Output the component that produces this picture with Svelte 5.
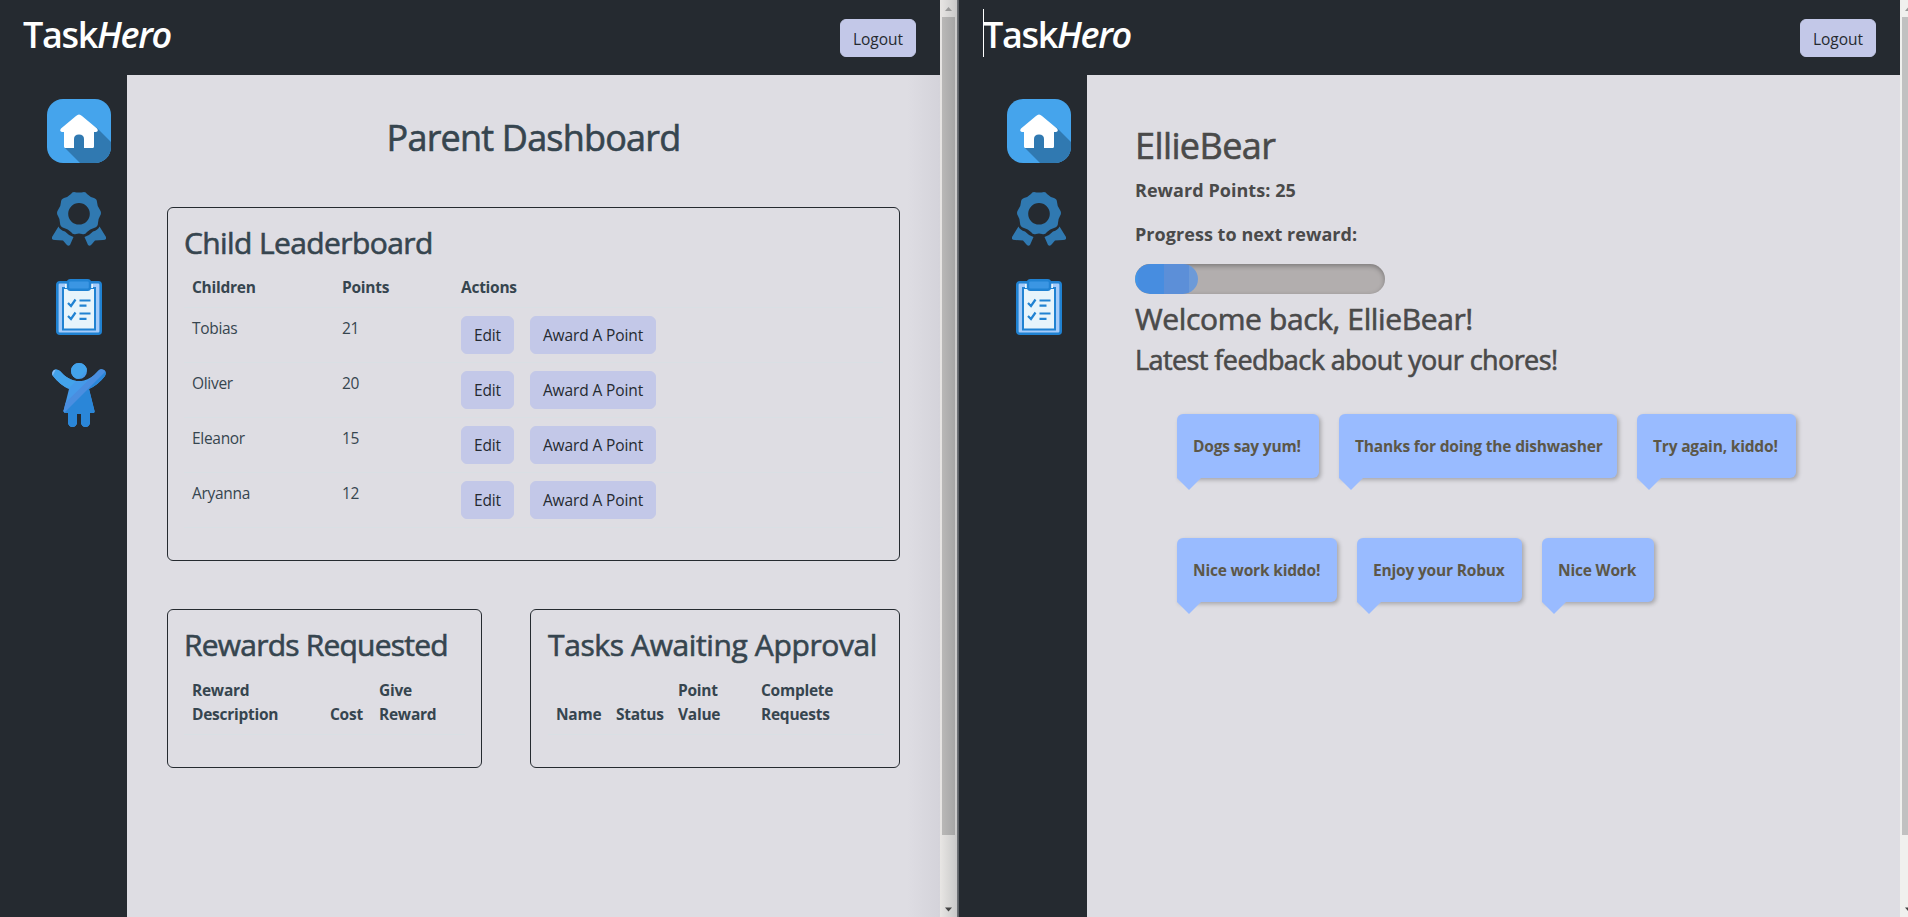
<script>
  const children = [
    { name: 'Tobias', points: 21 },
    { name: 'Oliver', points: 20 },
    { name: 'Eleanor', points: 15 },
    { name: 'Aryanna', points: 12 }
  ];
  const feedback = [
    [
      { text: 'Dogs say yum!', width: 142 },
      { text: 'Thanks for doing the dishwasher', width: 278 },
      { text: 'Try again, kiddo!', width: 159 }
    ],
    [
      { text: 'Nice work kiddo!', width: 160 },
      { text: 'Enjoy your Robux', width: 165 },
      { text: 'Nice Work', width: 112 }
    ]
  ];
  const progress = 25;
</script>

{#snippet homeIcon()}
  <svg class="icon home" viewBox="0 0 64 64">
    <rect width="64" height="64" rx="16" fill="#45a4ec" />
    <path d="M50 29L64 43V48A16 16 0 0 1 48 64H33L17.500 48.500L32 20Z" fill="#3079b1" />
    <path d="M29 17Q32 13.800 35 17L50 29.500Q52 32 49 33H47V47.500Q47 49 45.500 49H37V40Q37 35.500 32 35.500T27 40V49H18.500Q17 49 17 47.500V33H15Q12 32 14 29.500Z" fill="#fff" />
  </svg>
{/snippet}

{#snippet awardIcon()}
  <svg class="icon award" viewBox="0 0 54 54">
    <path fill="#3079b1" fill-rule="evenodd" d="M22 0Q27 1 32 0Q34 0 35 2Q38 5 42 6Q45 7 45 10Q45 14 48 18Q50 21 48 24Q46 27 46 31Q46 35 42 36Q38 37 35 40Q33 43 30 42Q27 41 24 42Q21 43 19 40Q16 37 12 36Q8 35 8 31Q8 27 6 24Q4 21 6 18Q9 14 9 10Q9 7 12 6Q16 5 19 2Q20 0 22 0ZM27 11A10.800 10.800 0 1 0 27 32.600A10.800 10.800 0 1 0 27 11Z" />
    <path fill="#3079b1" d="M6.500 34.500Q8 38 13 39.500Q16 43 21.500 45L18 53Q16 55 14 52L11 48.500L3 48Q-1 48 0 45ZM47.500 34.500Q46 38 41 39.500Q38 43 32.500 45L36 53Q38 55 40 52L43 48.500L51 48Q55 48 54 45Z" />
  </svg>
{/snippet}

{#snippet taskIcon()}
  <svg class="icon tasks" viewBox="0 0 46 56">
    <rect x="1.300" y="3.300" width="43.400" height="51.400" rx="2.500" fill="#a5cbf9" stroke="#2082d2" stroke-width="2.600" />
    <rect x="7" y="9" width="32" height="41.500" fill="#e7f4fb" stroke="#2082d2" stroke-width="2" />
    <path d="M9 5H37V9H9Z" fill="#e7f4fb" />
    <rect x="12" y="1.200" width="22" height="9.600" rx="2.500" fill="#3b96e3" stroke="#2082d2" stroke-width="2.400" />
    <path d="M12 24L15 27L19.500 20.500M12 37L15 40L19.500 33.500M23.500 21.500H34.500M23.500 26.700H30.500M23.500 34.500H34.500M23.500 39.800H30.500" fill="none" stroke="#2082d2" stroke-width="2.200" />
  </svg>
{/snippet}

{#snippet childIcon()}
  <svg class="icon child" viewBox="0 0 54 64">
    <defs>
      <clipPath id="figure">
        <circle cx="27" cy="8" r="8" />
        <path d="M8 8Q5 5.500 2 7Q-1 10 1 13Q8 22 17 26L11.500 48Q11.500 50 14 50H16V60Q17 64 20.500 64T25 60V51H29V60Q30 64 33.500 64T38 60V50H40Q43 50 42.500 48L37 26Q46 22 53 13Q55 9 52 7Q48 5 46 8Q39 16 32 17.500Q27 18.500 22 17.500Q15 16 8 8Z" />
      </clipPath>
    </defs>
    <g clip-path="url(#figure)">
      <path d="M0 0H54V64H0Z" fill="#459ae9" />
      <path d="M0 0H42L0 42Z" fill="#43a3eb" />
      <path d="M54 4V64H0V58Z" fill="#2a86d8" />
      <path d="M54 0V8L10 52V43Z" fill="#4a8ee0" />
      <path d="M0 6L4 6L0 14Z" fill="#8bbcf2" />
    </g>
  </svg>
{/snippet}

{#snippet arrow(down)}
  <svg class="arrow" viewBox="0 0 17 17">
    {#if down}
      <path d="M5 7.500H12L8.500 11.500Z" fill="#444" />
    {:else}
      <path d="M5 11H12L8.500 7Z" fill="#999" />
    {/if}
  </svg>
{/snippet}

{#snippet header(caret)}
  <header>
    <h1 class="logo" class:caret>Task<em>Hero</em></h1>
    <button>Logout</button>
  </header>
{/snippet}

<div class="screen">
  <div class="pane">
    {@render header(false)}
    <div class="body">
      <nav>
        {@render homeIcon()}
        {@render awardIcon()}
        {@render taskIcon()}
        {@render childIcon()}
      </nav>
      <main class="parent">
        <h1 class="page-title">Parent Dashboard</h1>
        <section class="card">
          <h2 class="t1">Child Leaderboard</h2>
          <table class="leaders">
            <thead>
              <tr><th class="c1">Children</th><th class="c2">Points</th><th>Actions</th></tr>
            </thead>
            <tbody>
              {#each children as child}
                <tr>
                  <td>{child.name}</td>
                  <td>{child.points}</td>
                  <td><div class="actions"><button class="edit">Edit</button><button class="give">Award A Point</button></div></td>
                </tr>
              {/each}
            </tbody>
          </table>
        </section>
        <div class="pair">
          <section class="card">
            <h2 class="t2">Rewards Requested</h2>
            <table>
              <thead>
                <tr><th class="r1">Reward<br />Description</th><th class="r2">Cost</th><th>Give<br />Reward</th></tr>
              </thead>
            </table>
          </section>
          <section class="card approvals">
            <h2 class="t3">Tasks Awaiting Approval</h2>
            <table>
              <thead>
                <tr><th class="a1">Name</th><th class="a2">Status</th><th class="a3">Point<br />Value</th><th>Complete<br />Requests</th></tr>
              </thead>
            </table>
          </section>
        </div>
      </main>
    </div>
  </div>

  <div class="scrollbar shaded">
    {@render arrow(false)}
    <div class="thumb"></div>
    {@render arrow(true)}
  </div>
  <div class="divider"></div>

  <div class="pane">
    {@render header(true)}
    <div class="body">
      <nav>
        {@render homeIcon()}
        {@render awardIcon()}
        {@render taskIcon()}
      </nav>
      <main class="kid">
        <h1>EllieBear</h1>
        <p class="points">Reward Points: 25</p>
        <p class="next">Progress to next reward:</p>
        <div class="bar"><div class="fill" style="width: {progress}%"></div></div>
        <h2>Welcome back, EllieBear!</h2>
        <h3>Latest feedback about your chores!</h3>
        <div class="feedback">
          {#each feedback as row}
            <div class="row">
              {#each row as item}
                <div class="bubble" style="width: {item.width}px">{item.text}</div>
              {/each}
            </div>
          {/each}
        </div>
      </main>
    </div>
  </div>
  <div class="scrollbar cut">
    {@render arrow(false)}
    <div class="thumb"></div>
    {@render arrow(true)}
  </div>
</div>

<style>
  :global(body) {
    margin: 0;
    overflow: hidden;
  }
  .screen {
    display: flex;
    width: 1908px;
    height: 917px;
    overflow: hidden;
    background: #252a30;
    font: 15.5px/24px 'Open Sans', 'Noto Sans', sans-serif;
    color: #36454f;
  }
  .screen * {
    box-sizing: border-box;
  }
  h1, h2, h3, p {
    margin: 0;
    white-space: nowrap;
  }
  main h1, main h2, main h3 {
    font-weight: 400;
    -webkit-text-stroke: 0.6px currentColor;
  }
  .pane {
    flex: none;
    width: 940px;
    display: flex;
    flex-direction: column;
  }
  header {
    flex: none;
    height: 75px;
    padding: 0 24px 0 23px;
    display: flex;
    justify-content: space-between;
    align-items: center;
  }
  .logo {
    height: 48px;
    padding-top: 4px;
    margin-top: -9px;
    font-size: 36px;
    line-height: 43px;
    font-weight: 600;
    letter-spacing: -1.35px;
    color: #fff;
  }
  .logo.caret {
    box-shadow: inset 1px 0 #fff;
  }
  button {
    height: 38px;
    padding: 6px 12px;
    border: 1px solid #c3c8e8;
    border-radius: 6px;
    background: #c3c8e8;
    color: #252a30;
    font: inherit;
    letter-spacing: -0.12px;
    white-space: nowrap;
  }
  header button {
    width: 76px;
    padding: 7px 0 5px;
    letter-spacing: 0;
  }
  .body {
    flex: 1;
    display: flex;
  }
  nav {
    width: 127px;
    padding: 24px 0 0 31px;
    display: flex;
    flex-direction: column;
    align-items: center;
  }
  .icon {
    display: block;
    flex: none;
  }
  .home {
    width: 64px;
    height: 64px;
  }
  .award {
    width: 54px;
    height: 54px;
    margin-top: 29px;
  }
  .tasks {
    width: 46px;
    height: 56px;
    margin-top: 33px;
  }
  .child {
    width: 54px;
    height: 64px;
    margin-top: 28px;
  }
  main {
    flex: 1;
    background: #dedde3;
  }
  .parent {
    padding: 41px 40px 40px;
    background: linear-gradient(to right, #dedde3 780px, #d4d3da);
  }
  .page-title {
    margin-bottom: 48px;
    text-align: center;
    font-size: 36px;
    line-height: 43px;
    letter-spacing: -0.8px;
  }
  .card {
    padding: 16px;
    border: 1px solid #252a30;
    border-radius: 6px;
  }
  .card h2 {
    padding-top: 1px;
    margin-bottom: 7px;
    font-size: 30px;
    line-height: 35px;
  }
  .card .t1 {
    letter-spacing: -0.6px;
  }
  .card .t2 {
    letter-spacing: -0.78px;
  }
  .card .t3 {
    letter-spacing: -0.38px;
  }
  .pair {
    display: grid;
    grid-template-columns: 315px 370px;
    gap: 48px;
    margin-top: 48px;
  }
  .pair h2 {
    margin-bottom: 8px;
  }
  .approvals {
    padding: 16px 15px 16px 17px;
  }
  table {
    width: 100%;
    margin-bottom: 16px;
    border-collapse: separate;
    border-spacing: 0;
    table-layout: fixed;
  }
  th, td {
    padding: 8px;
    border-bottom: 1px solid #d9dfe4;
    text-align: left;
    vertical-align: top;
    white-space: nowrap;
  }
  td {
    letter-spacing: -0.3px;
  }
  th {
    vertical-align: bottom;
    font-weight: 700;
    letter-spacing: -0.26px;
  }
  .c1 { width: 150px; }
  .c2 { width: 119px; }
  .r1 { width: 138px; }
  .r2 { width: 49px; }
  .a1 { width: 60px; }
  .a2 { width: 62px; }
  .a3 { width: 83px; }
  .actions {
    display: flex;
    gap: 16px;
  }
  .edit {
    width: 53px;
    padding: 6px 0;
  }
  .give {
    width: 126px;
    padding: 6px 0;
  }
  .kid {
    padding: 49px 48px 48px;
    color: #4a4a4a;
  }
  .kid h1 {
    font-size: 36px;
    line-height: 43px;
    letter-spacing: -0.6px;
  }
  .kid p {
    font-size: 18px;
    line-height: 27px;
    font-weight: 700;
    letter-spacing: 0.05px;
  }
  .points {
    margin-top: 10px;
  }
  .kid .next {
    margin: 17px 0 16px;
  }
  .bar {
    width: 250px;
    height: 30px;
    border-radius: 15px;
    background: #b2aeae;
    box-shadow: inset 0 2px 5px rgba(0, 0, 0, 0.3);
    overflow: hidden;
  }
  .fill {
    height: 100%;
    border-radius: 15px;
    background: linear-gradient(to right, #3d9af0 0, #478de0 4px 29px, #5c8fd8 29px 54px, #6c9ad8 54px);
  }
  .kid h2 {
    margin-top: 7px;
    font-size: 30px;
    line-height: 35px;
    letter-spacing: -0.38px;
  }
  .kid h3 {
    margin-top: 7px;
    font-size: 27px;
    line-height: 33px;
    letter-spacing: -0.58px;
  }
  .feedback {
    display: flex;
    flex-direction: column;
    gap: 60px;
    margin: 38px 0 0 42px;
  }
  .row {
    display: flex;
    gap: 20px;
  }
  .bubble {
    position: relative;
    height: 64px;
    padding: 20px 16px;
    border-radius: 6px 6px 6px 0;
    background: #99bbff;
    box-shadow: 2px 2px 4px rgba(0, 0, 0, 0.25);
    color: #5c5748;
    font-weight: 700;
    letter-spacing: -0.18px;
    white-space: nowrap;
  }
  .bubble::after {
    content: '';
    position: absolute;
    left: 0;
    top: 64px;
    border: 12px solid transparent;
    border-top-color: #99bbff;
    border-bottom: 0;
  }
  .scrollbar {
    flex: none;
    width: 17px;
    display: flex;
    flex-direction: column;
    align-items: flex-start;
    background: #f0f0ee;
  }
  .shaded {
    background: linear-gradient(to right, #e8e6e4, #c9c9c9);
  }
  .arrow {
    display: block;
    flex: none;
    width: 17px;
    height: 17px;
  }
  .thumb {
    width: 13px;
    height: 818px;
    margin: 0 2px 65px;
    background: #c1c1c1;
  }
  .shaded .thumb {
    background: linear-gradient(to right, #b9b8b7, #a6a6a6);
  }
  .divider {
    flex: none;
    width: 3px;
    background: linear-gradient(to right, #6d7075 1px, #4d5358 2px, #252a30 2px);
  }
</style>
